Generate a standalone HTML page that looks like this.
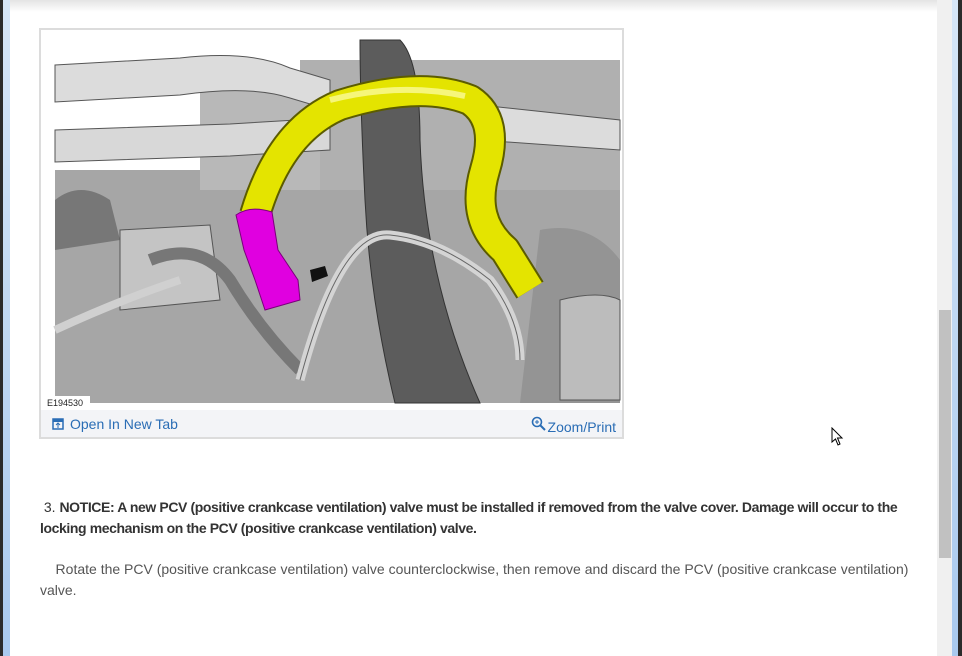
<!DOCTYPE html>
<html><head><meta charset="utf-8">
<style>
html,body{margin:0;padding:0;}
body{width:962px;height:656px;position:relative;overflow:hidden;background:#fff;font-family:"Liberation Sans",Arial,sans-serif;}
.lb{position:absolute;left:0;top:0;width:3px;height:656px;background:#2b2b2b;}
.lb2{position:absolute;left:3px;top:0;width:7px;height:656px;background:linear-gradient(#d6e6f7,#a9c9ee);}
.rb{position:absolute;left:958px;top:0;width:4px;height:656px;background:#2b2b2b;}
.rb2{position:absolute;left:952px;top:0;width:6px;height:656px;background:linear-gradient(#d6e6f7,#a9c9ee);}
.track{position:absolute;left:937px;top:0;width:15px;height:656px;background:#f0f0f0;}
.thumb{position:absolute;left:939px;top:310px;width:12px;height:248px;background:#c1c1c1;}
.shadow{position:absolute;left:10px;top:0;width:927px;height:12px;background:linear-gradient(#e4e4e4,#fff);}
.frame{position:absolute;left:39px;top:28px;width:581px;height:407px;border:2px solid #dcdcdc;background:#fff;}
.foot{position:absolute;left:41px;top:410px;width:581px;height:27px;background:#f3f4f7;}
.foot span{position:absolute;top:6px;font-size:14px;color:#2a6db5;}
.txt{position:absolute;left:40px;font-size:14px;color:#333;line-height:21px;width:885px;}
.txt b{letter-spacing:-0.4px;}
</style></head><body>
<div class="lb"></div><div class="lb2"></div>
<div class="track"></div><div class="thumb"></div>
<div class="rb2"></div><div class="rb"></div>
<div class="shadow"></div>
<div class="frame"></div>
<svg style="position:absolute;left:0;top:0" width="962" height="656">
<rect x="55" y="170" width="565" height="233" fill="#a6a6a6"/>
<rect x="300" y="60" width="320" height="130" fill="#b0b0b0"/>
<rect x="200" y="90" width="120" height="100" fill="#b8b8b8"/>
<path d="M55 65 L180 58 Q250 50 290 68 L330 80 L330 110 L290 98 Q250 85 180 95 L55 102 Z" fill="#dcdcdc" stroke="#555"/>
<path d="M55 130 L230 124 L330 118 L330 150 L230 156 L55 162 Z" fill="#d8d8d8" stroke="#555"/>
<path d="M480 105 L620 120 L620 150 L480 140 Z" fill="#dcdcdc" stroke="#555"/>
<path d="M55 200 Q80 180 110 200 L120 240 L55 250 Z" fill="#777"/>
<path d="M120 230 L210 225 L220 300 L120 310 Z" fill="#c4c4c4" stroke="#555"/>
<path d="M150 260 Q200 240 230 280 Q260 330 300 370" fill="none" stroke="#777" stroke-width="12"/>
<path d="M55 330 Q120 300 180 280" fill="none" stroke="#d0d0d0" stroke-width="8"/>
<path d="M540 230 Q590 220 620 260 L620 403 L520 403 Z" fill="#949494"/>
<path d="M560 300 Q600 290 620 300 L620 400 L560 400 Z" fill="#bcbcbc" stroke="#555"/>
<path d="M360 40 L400 40 Q420 60 420 140 Q425 280 480 403 L395 403 Q370 300 365 200 Q360 100 360 40 Z" fill="#5c5c5c" stroke="#333"/>
<path d="M300 380 Q340 230 390 235 Q440 240 490 280 Q520 320 520 360" fill="none" stroke="#d4d4d4" stroke-width="9"/>
<path d="M300 380 Q340 230 390 235 Q440 240 490 280 Q520 320 520 360" fill="none" stroke="#666" stroke-width="1"/>
<path d="M255 215 Q280 130 340 105 Q420 80 470 100 Q500 120 485 170 Q470 220 505 250 L530 290" fill="none" stroke="#5c5c00" stroke-width="32" stroke-linejoin="round"/>
<path d="M255 215 Q280 130 340 105 Q420 80 470 100 Q500 120 485 170 Q470 220 505 250 L530 290" fill="none" stroke="#e4e400" stroke-width="28" stroke-linejoin="round"/>
<path d="M330 100 Q400 82 465 96" fill="none" stroke="#f6f67a" stroke-width="6"/>
<path d="M236 215 Q250 205 272 212 L278 250 L298 280 L300 300 L265 310 L255 280 L244 250 Z" fill="#e000e0" stroke="#7a007a"/>
<path d="M310 270 L325 266 L328 276 L312 282 Z" fill="#111"/>
<rect x="44" y="396" width="46" height="12" fill="#fff"/>
<text x="47" y="406" font-size="9" font-family="Liberation Sans" fill="#222">E194530</text>
</svg>
<div class="foot">
<span style="left:11px"><svg width="12" height="12" style="vertical-align:-1px;margin-right:6px"><rect x="1" y="1" width="10" height="10" fill="none" stroke="#2a6db5" stroke-width="1.5"/><rect x="1" y="1" width="10" height="3" fill="#2a6db5"/><path d="M6 10 V5 M4 7 L6 5 L8 7" stroke="#2a6db5" fill="none"/></svg>Open In New Tab</span>
<span style="right:6px"><svg width="15" height="15" style="vertical-align:1px;margin-right:2px"><circle cx="6" cy="6" r="4.5" fill="none" stroke="#2a6db5" stroke-width="1.6"/><path d="M9.5 9.5 L14 14" stroke="#2a6db5" stroke-width="2"/><path d="M4 6 H8 M6 4 V8" stroke="#2a6db5"/></svg>Zoom/Print</span>
</div>
<div class="txt" style="top:497px">&nbsp;3. <b>NOTICE: A new PCV (positive crankcase ventilation) valve must be installed if removed from the valve cover. Damage will occur to the locking mechanism on the PCV (positive crankcase ventilation) valve.</b></div>
<div class="txt" style="top:559px;color:#555">&nbsp;&nbsp;&nbsp;&nbsp;Rotate the PCV (positive crankcase ventilation) valve counterclockwise, then remove and discard the PCV (positive crankcase ventilation) valve.</div>
<svg style="position:absolute;left:831px;top:427px" width="14" height="20"><path d="M1 1 L1 15 L4.5 12 L7 18 L9 17 L6.5 11 L11 11 Z" fill="#fff" stroke="#000"/></svg>
</body></html>
